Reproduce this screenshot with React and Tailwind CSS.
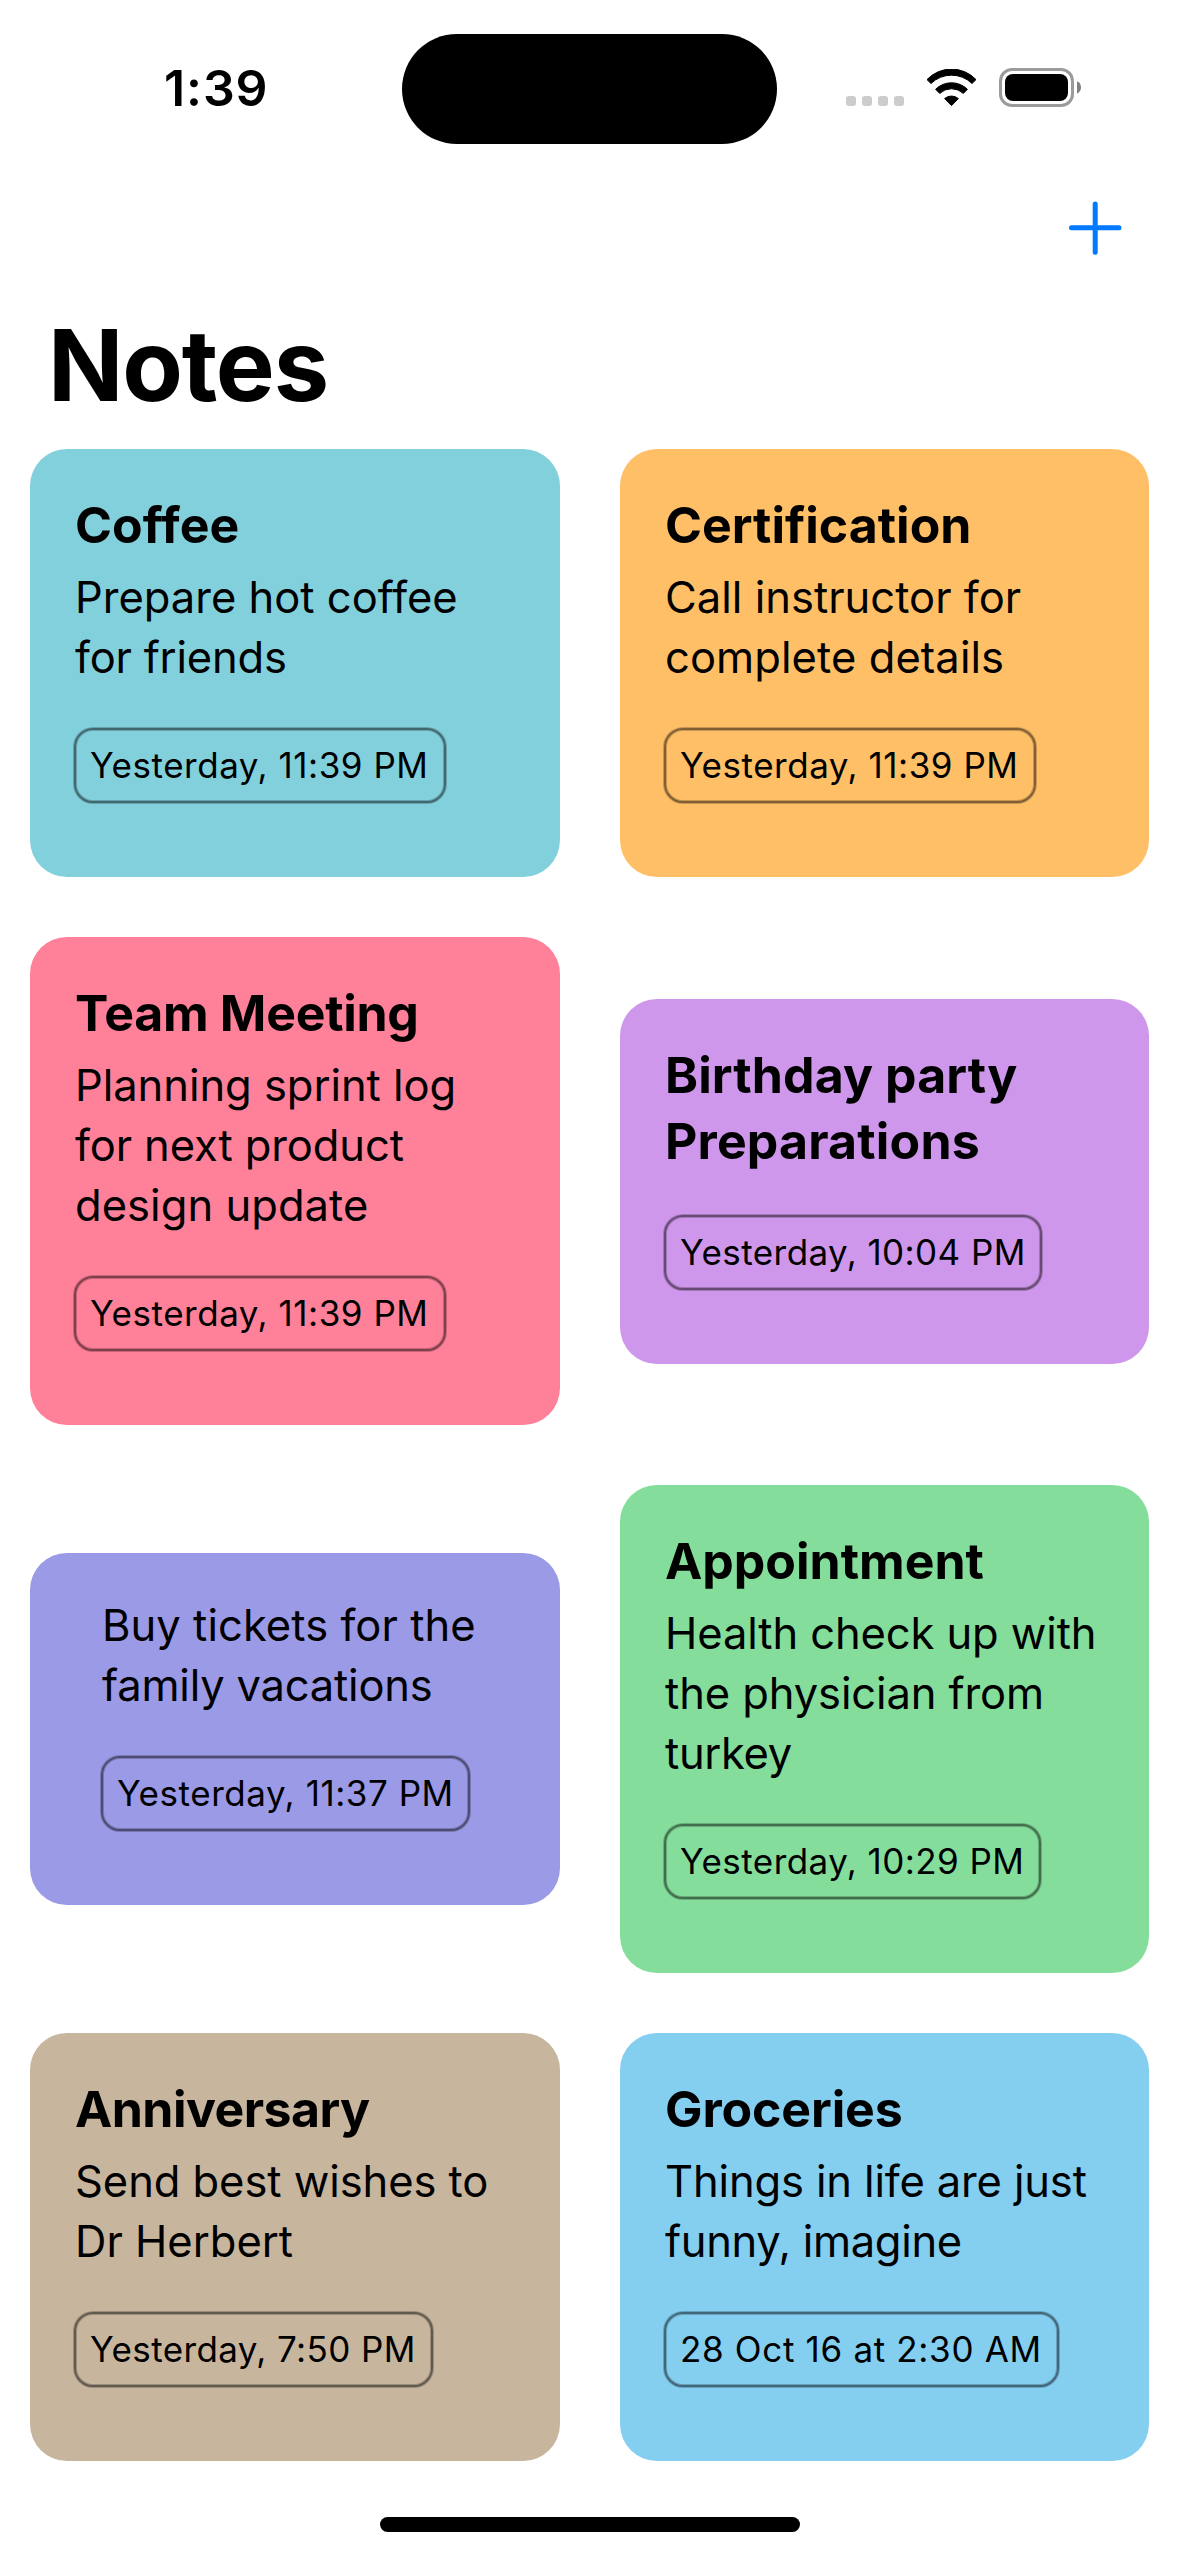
import React from "react";

const notes = [
  {
    color: "bg-[#83d0dd]",
    title: [["Coffee", "tracking-[0.1px]"]],
    body: [["Prepare hot coffee", "tracking-normal"], ["for friends", "tracking-[-0.2px]"]],
    date: ["Yesterday, 11:39 PM", "w-[372px] tracking-[0.53px]"],
  },
  {
    color: "bg-[#ffbf67]",
    title: [["Certification", "tracking-[0px]"]],
    body: [["Call instructor for", "tracking-[0.03px]"], ["complete details", "tracking-[0.08px]"]],
    date: ["Yesterday, 11:39 PM", "w-[372px] tracking-[0.53px]"],
  },
  {
    color: "bg-[#ff8199]",
    title: [["Team Meeting", "tracking-[-0.28px]"]],
    body: [
      ["Planning sprint log", "tracking-[-0.04px]"],
      ["for next product", "tracking-[-0.1px]"],
      ["design update", "tracking-[0.05px]"],
    ],
    date: ["Yesterday, 11:39 PM", "w-[372px] tracking-[0.53px]"],
  },
  {
    color: "bg-[#cf97eb]",
    title: [["Birthday party", "tracking-[0.1px]"], ["Preparations", "tracking-[0.18px]"]],
    body: [],
    date: ["Yesterday, 10:04 PM", "w-[378px] tracking-[0.43px]"],
  },
  {
    color: "bg-[#9b9ae6]",
    indent: true,
    title: [],
    body: [["Buy tickets for the", "tracking-[0.06px]"], ["family vacations", "tracking-[-0.2px]"]],
    date: ["Yesterday, 11:37 PM", "w-[369px] tracking-[0.54px]"],
  },
  {
    color: "bg-[#85dd9b]",
    title: [["Appointment", "tracking-[0px]"]],
    body: [
      ["Health check up with", "tracking-[-0.1px]"],
      ["the physician from", "tracking-[-0.1px]"],
      ["turkey", "tracking-[-0.34px]"],
    ],
    date: ["Yesterday, 10:29 PM", "w-[377px] tracking-[0.44px]"],
  },
  {
    color: "bg-[#c7b59e]",
    title: [["Anniversary", "tracking-[-0.55px]"]],
    body: [["Send best wishes to", "tracking-[-0.06px]"], ["Dr Herbert", "tracking-normal"]],
    date: ["Yesterday, 7:50 PM", "w-[359px] tracking-[0.4px]"],
  },
  {
    color: "bg-[#84cef0]",
    title: [["Groceries", "tracking-[-0.1px]"]],
    body: [["Things in life are just", "tracking-[-0.14px]"], ["funny, imagine", "tracking-[-0.31px]"]],
    date: ["28 Oct 16 at 2:30 AM", "w-[395px] tracking-[0.67px]"],
  },
];

function NoteCard({ note }) {
  const [date, dateClass] = note.date;
  return (
    <article
      className={`flex flex-col rounded-[37px] pt-[42px] pb-[74px] ${note.indent ? "pl-[72px]" : "pl-[45px]"} ${note.color}`}
    >
      {note.title.length > 0 && (
        <h2 className="mt-px mb-[9px] text-[50px] leading-[66px] font-bold whitespace-nowrap">
          {note.title.map(([line, tracking]) => (
            <span key={line} className={`block ${tracking}`}>{line}</span>
          ))}
        </h2>
      )}
      {note.body.length > 0 && (
        <p className="text-[43.5px] leading-[60px] whitespace-nowrap">
          {note.body.map(([line, tracking]) => (
            <span key={line} className={`block ${tracking}`}>{line}</span>
          ))}
        </p>
      )}
      <time
        className={`-ml-px h-[75px] rounded-[19px] border-2 border-black/50 pl-[14px] text-[35px] leading-[71px] whitespace-nowrap shadow-[0_0_0_1px_rgba(0,0,0,0.22),inset_0_0_0_1px_rgba(0,0,0,0.22)] ${note.body.length > 0 ? "mt-[41px]" : "mt-[32px]"} ${dateClass}`}
      >
        {date}
      </time>
    </article>
  );
}

function WifiIcon() {
  return (
    <svg
      className="mt-[69px] ml-[22px] h-[38px] w-[51px]"
      viewBox="0 0 51 38"
      fill="#000"
      stroke="#000"
      strokeWidth="1"
      strokeLinejoin="round"
    >
      <path d="M1 11.2A33.7 33.7 0 0 1 50 11.2L46 15.1A29.4 29.4 0 0 0 5 15.1Z" transform="translate(0 -0.6)" />
      <path d="M9.6 20.3A22.6 22.6 0 0 1 41.4 20.3L37.3 24.4A17.3 17.3 0 0 0 13.7 24.4Z" />
      <path d="M18.6 29.6A10.6 10.6 0 0 1 32.4 29.6L25.5 36.6Z" />
    </svg>
  );
}

function BatteryIcon() {
  return (
    <svg className="mt-[68px] ml-[22px] h-[39px] w-[82px]" viewBox="0 0 82 39">
      <rect x="1.5" y="1.5" width="72" height="36" rx="11.5" fill="none" stroke="#9b9b9b" strokeWidth="3" />
      <rect x="6" y="6" width="63" height="27" rx="8" />
      <path d="M78 13.2C80.8 14.2 82 16.8 82 19.3S80.8 24.6 78 25.8Z" fill="#808080" />
    </svg>
  );
}

export default function App() {
  return (
    <div className="flex h-[2556px] w-[1179px] flex-col overflow-hidden bg-white font-['Inter','Liberation_Sans',sans-serif] text-black">
      <header className="flex h-[201px] items-start">
        <span className="mt-[58px] ml-[164px] w-[238px] text-[50px] leading-[60px] font-semibold tracking-[0.9px]">
          1:39
        </span>
        <div className="mt-[34px] h-[110px] w-[375px] rounded-full bg-black" />
        <div className="mt-[96px] ml-[69px] flex gap-[6px]">
          {[0, 1, 2, 3].map((i) => (
            <span key={i} className="size-[10px] rounded-[3px] bg-[#cccccc]" />
          ))}
        </div>
        <WifiIcon />
        <BatteryIcon />
      </header>
      <button type="button" aria-label="Add note" className="mr-[57px] h-[54px] w-[54px] self-end">
        <svg
          className="h-[54px] w-[54px]"
          viewBox="0 0 54 54"
          stroke="#007aff"
          strokeWidth="5"
          strokeLinecap="round"
        >
          <path d="M27.2 3V51.2M3.5 26.8H51" />
        </svg>
      </button>
      <h1 className="mt-[50px] ml-[48px] text-[99px] leading-[120px] font-bold tracking-[-1.2px]">Notes</h1>
      <main className="mt-[24px] grid grid-cols-[530px_529px] items-center gap-[60px] pl-[30px]">
        {notes.map((note, i) => (
          <NoteCard key={i} note={note} />
        ))}
      </main>
      <div className="mt-[56px] h-[15px] w-[420px] shrink-0 self-center rounded-full bg-black" />
    </div>
  );
}
